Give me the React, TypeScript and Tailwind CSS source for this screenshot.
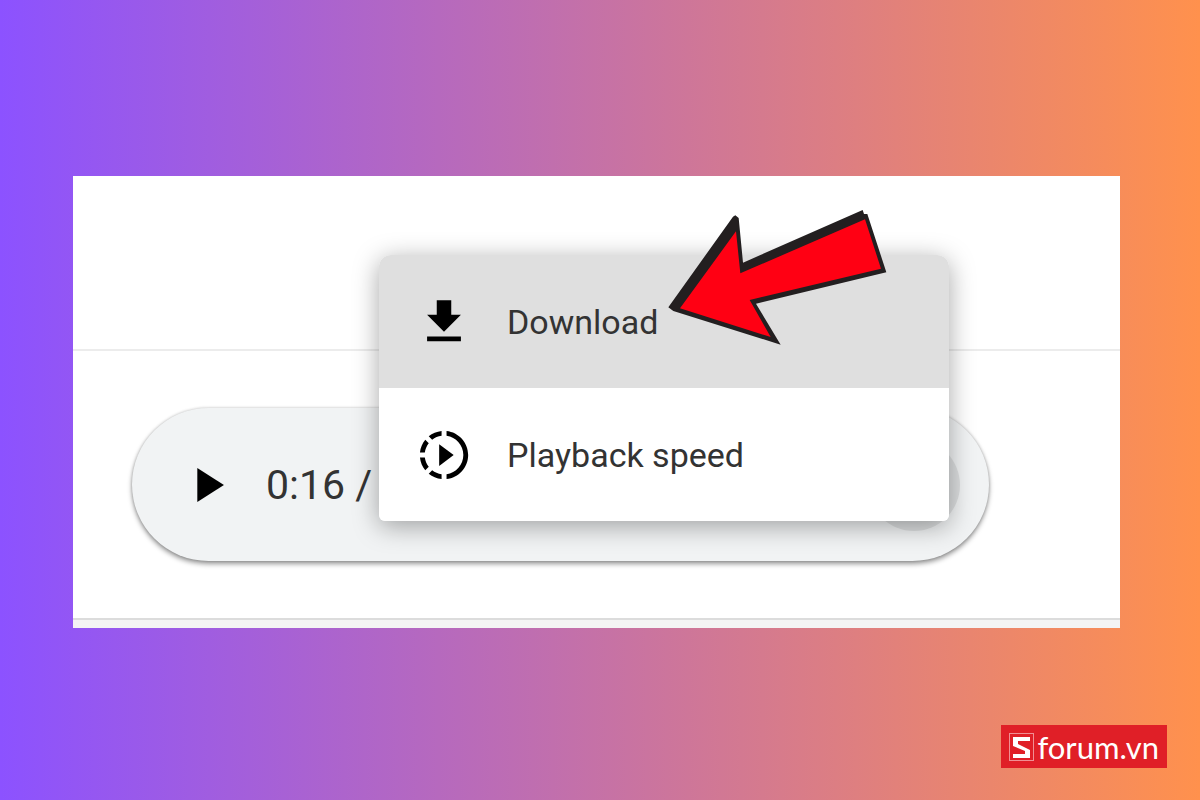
import type { ReactNode } from 'react';

const PLAY_PATH = 'M8 5v14l11-7z';
const DOWNLOAD_PATH = 'M19 9h-4V3H9v6H5l7 7 7-7zM5 18v2h14v-2H5z';
const SPEED_PATH =
  'M10 7.5v9l6-4.5zM11 4.07V2.05c-2.01.2-3.84 1-5.32 2.21L7.1 5.69c1.11-.86 2.44-1.44 3.9-1.62zM5.69 7.1L4.26 5.68C3.05 7.16 2.25 8.99 2.05 11h2.02c.18-1.46.76-2.79 1.62-3.9zM4.07 13H2.05c.2 2.01 1 3.84 2.21 5.32l1.43-1.43c-.86-1.1-1.44-2.43-1.62-3.89zm1.61 6.74C7.16 20.95 9 21.75 11 21.95v-2.02c-1.46-.18-2.79-.76-3.9-1.62l-1.42 1.43zM22 12c0 5.16-3.92 9.42-8.95 9.95v-2.02C16.97 19.41 20 16.05 20 12s-3.03-7.41-6.95-7.93V2.05C18.08 2.58 22 6.83 22 12z';

const Icon = ({ path }: { path: string }) => (
  <svg className="h-[58px] w-[58px] shrink-0" viewBox="0 0 24 24" fill="black" aria-hidden="true">
    <path d={path} />
  </svg>
);

const MenuItem = ({ path, active, children }: { path: string; active?: boolean; children: ReactNode }) => (
  <button
    type="button"
    role="menuitem"
    className={`flex h-[133px] w-full items-center gap-[34px] pl-9 text-left text-[34px] leading-10 text-[#333] ${
      active ? 'rounded-t-xl bg-[#dfdfdf]' : 'rounded-b-md bg-white'
    }`}
  >
    <Icon path={path} />
    <span>{children}</span>
  </button>
);

const AudioPlayer = () => (
  <div className="ml-[59px] mr-[131px] flex h-[153px] items-center rounded-full bg-[#f1f3f4] pl-[46px] pr-[29px] shadow-[0_3px_5px_rgba(0,0,0,0.4),0_0_3px_rgba(0,0,0,0.2)]">
    <button type="button" aria-label="Play">
      <Icon path={PLAY_PATH} />
    </button>
    <span className="ml-[30px] text-[41px] leading-[48px] text-[#333]">0:16 /</span>
    <button type="button" aria-label="More options" className="ml-auto h-[92px] w-[92px] rounded-full bg-[#dddfe0]" />
  </div>
);

const PlayerMenu = () => (
  <div
    role="menu"
    className="absolute left-[306px] top-[79px] w-[570px] rounded-t-xl rounded-b-md shadow-[0_5px_26px_rgba(0,0,0,0.35)]"
  >
    <MenuItem path={DOWNLOAD_PATH} active>
      Download
    </MenuItem>
    <MenuItem path={SPEED_PATH}>Playback speed</MenuItem>
  </div>
);

const PointerArrow = () => (
  <svg
    className="pointer-events-none absolute left-[577px] top-6 h-[160px] w-[250px]"
    viewBox="0 0 750 480"
    aria-hidden="true"
  >
    <path
      fill="#231f20"
      d="M55 322L249 50L256 46L266 54L279 188L638 30L642 42L652 42L709 217L318 311L392 434L70 333Z"
    />
    <path fill="#ff0013" d="M90 325L258 94L271 220L645 58L693 206L299 300L362 411Z" />
  </svg>
);

const Brand = () => (
  <a
    href="#"
    className="flex h-[43px] items-center gap-[3px] bg-[#e01f27] px-2 font-[Lato,sans-serif] text-[31px] leading-10 text-white"
  >
    <svg className="h-7 w-[25px]" viewBox="0 0 25 28" aria-hidden="true">
      <rect x="0.5" y="0.5" width="24" height="27" fill="none" stroke="white" strokeOpacity="0.5" />
      <path fill="white" d="M4 4H21V8H9V11L21 17V25H4V21H16V18L4 13Z" />
    </svg>
    <span>forum.vn</span>
  </a>
);

export default function App() {
  return (
    <div className="flex min-h-screen flex-col bg-linear-to-r/srgb from-[#8c52ff] to-[#ff914d] font-[Roboto,sans-serif]">
      <main className="relative ml-[73px] mr-20 mt-[176px] bg-white">
        <div className="h-[175px] border-b-2 border-[#ececec]" />
        <section className="pb-[57px] pt-[57px]">
          <AudioPlayer />
        </section>
        <div className="h-[10px] border-t-2 border-[#dcdcdc] bg-[#f4f4f4]" />
        <PlayerMenu />
        <PointerArrow />
      </main>
      <footer className="mt-auto flex justify-end pb-8 pr-[33px]">
        <Brand />
      </footer>
    </div>
  );
}
